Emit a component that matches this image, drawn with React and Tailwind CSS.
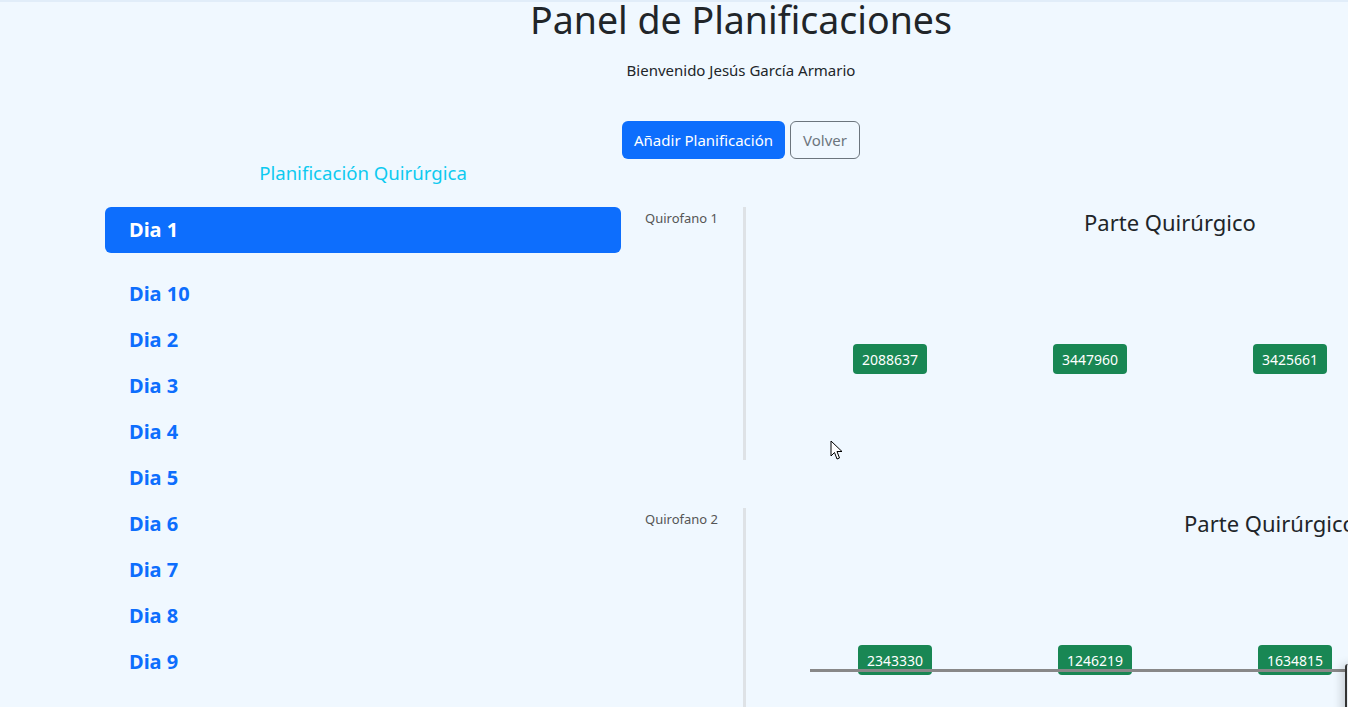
export default function App() {
  const dias = ["Dia 10", "Dia 2", "Dia 3", "Dia 4", "Dia 5", "Dia 6", "Dia 7", "Dia 8", "Dia 9"];

  return (
    <div className="relative w-full h-[707px] overflow-hidden bg-[#f0f8ff] border-t-2 border-[#e1edf9] font-['Noto_Sans',sans-serif] text-[#212529]">
      <div className="w-[1482px]">
        {/* Cabecera */}
        <h1 className="text-center text-[37.5px] leading-[48px] -mt-[6px]">Panel de Planificaciones</h1>
        <p className="text-center text-[15px] leading-[24px] mt-[14px]">Bienvenido Jesús García Armario</p>
        <div className="flex justify-center gap-[5px] mt-[39px]">
          <button className="h-[38px] px-[12px] rounded-[6px] bg-[#0d6efd] text-white text-[15px]">
            Añadir Planificación
          </button>
          <button className="h-[38px] px-[12px] rounded-[6px] border border-[#6c757d] text-[#6c757d] text-[15px]">
            Volver
          </button>
        </div>

        {/* Título de la sección */}
        <div className="pl-[105px]">
          <h4 className="w-[516px] text-center text-[18.6px] leading-[26px] text-[#0dcaf0] mt-[1px]">
            Planificación Quirúrgica
          </h4>
        </div>

        <div className="flex items-start pl-[105px] mt-[21px]">
          {/* Lista de días */}
          <div className="w-[516px] flex flex-col">
            <div className="h-[46px] rounded-[6px] bg-[#0d6efd] text-white font-bold text-[20px] pl-[24px] flex items-center">
              Dia 1
            </div>
            <div className="mt-[18px] flex flex-col">
              {dias.map((d) => (
                <div key={d} className="h-[46px] pl-[24px] flex items-center font-bold text-[20px] text-[#0d6efd]">
                  {d}
                </div>
              ))}
            </div>
          </div>

          {/* Quirófanos */}
          <div className="flex-1 flex flex-col">
            <div className="flex">
              <div className="w-[122px] text-right pr-[25px] pt-[2px] text-[13px] text-[#555]">Quirofano 1</div>
              <div className="flex-1 h-[253px] border-l-[3px] border-[#dee2e6]">
                <div className="pl-[338px] text-[22px] leading-[30px]">Parte Quirúrgico</div>
                <div className="flex gap-[126px] pl-[107px] mt-[107px]">
                  {["2088637", "3447960", "3425661"].map((n) => (
                    <span key={n} className="w-[74px] h-[30px] rounded-[4px] bg-[#198754] text-white text-[14px] flex items-center justify-center">
                      {n}
                    </span>
                  ))}
                </div>
              </div>
            </div>

            <div className="flex mt-[48px]">
              <div className="w-[122px] text-right pr-[25px] pt-[2px] text-[13px] text-[#555]">Quirofano 2</div>
              <div className="relative flex-1 h-[220px] border-l-[3px] border-[#dee2e6]">
                <div className="pl-[438px] text-[22px] leading-[30px]">Parte Quirúrgico</div>
                <div className="flex gap-[126px] pl-[112px] mt-[107px]">
                  {["2343330", "1246219", "1634815"].map((n) => (
                    <span key={n} className="w-[74px] h-[30px] rounded-[4px] bg-[#198754] text-white text-[14px] flex items-center justify-center">
                      {n}
                    </span>
                  ))}
                </div>
                <div className="absolute left-[64px] right-0 top-[161px] h-[3px] bg-[#888]" />
              </div>
            </div>
          </div>
        </div>
      </div>

      {/* Borde de un elemento flotante en la esquina */}
      <div className="absolute left-[1345px] top-[662px] w-[40px] h-[60px] bg-[#e9eef3] border-l-2 border-[#333] rounded-tl-[3px] shadow-[-4px_0_8px_rgba(0,0,0,0.15)]" />

      {/* Cursor */}
      <svg className="absolute left-[830px] top-[438px]" width="13" height="21" viewBox="0 0 13 21">
        <path d="M1 1 L1 16 L4.5 12.5 L7 19 L9.5 18 L7 11.5 L12 11.5 Z" fill="#fff" stroke="#000" strokeWidth="1" strokeLinejoin="round" />
      </svg>
    </div>
  );
}
